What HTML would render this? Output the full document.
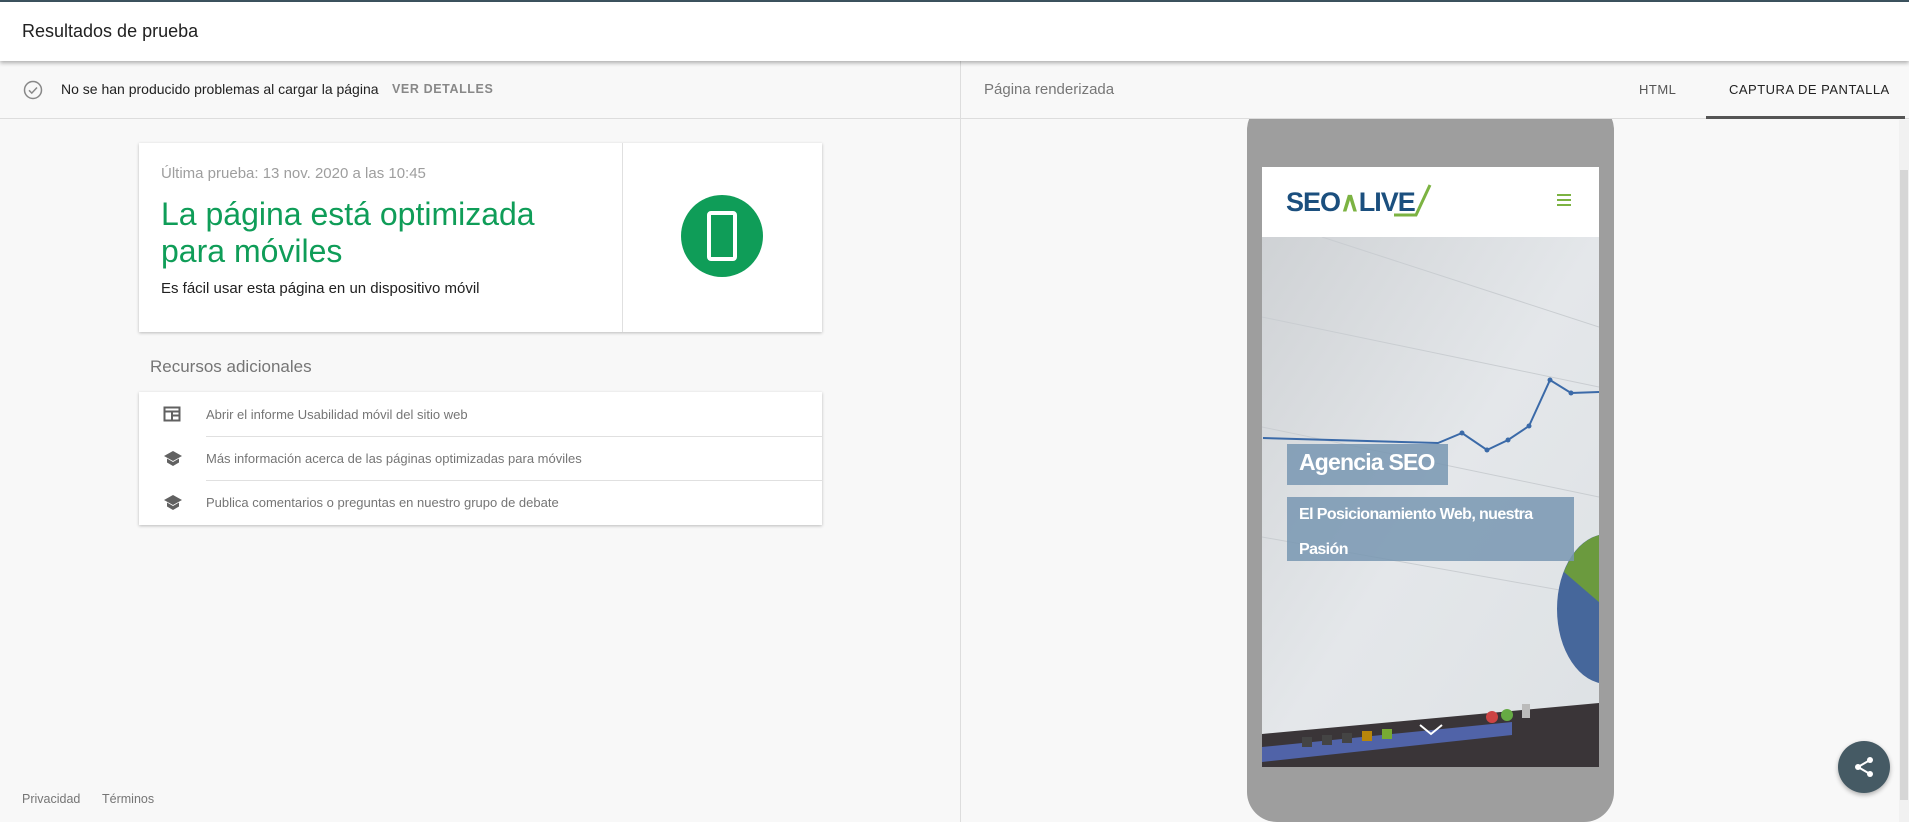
<!DOCTYPE html>
<html><head><meta charset="utf-8">
<style>
*{box-sizing:border-box;margin:0;padding:0}
body{width:1909px;height:822px;overflow:hidden;background:#f8f8f8;font-family:"Liberation Sans",Arial,sans-serif;position:relative}
.abs{position:absolute}
#topline{left:0;top:0;width:1909px;height:2px;background:#3d5360}
#hdr{left:0;top:2px;width:1909px;height:59px;background:#fff;box-shadow:0 2px 4px rgba(0,0,0,.3);z-index:2}
#hdr span{position:absolute;left:22px;top:19px;font-size:18px;color:#212121}
#status{left:0;top:61px;width:960px;height:58px;border-bottom:1px solid #ddd}
#rstatus{left:961px;top:61px;width:948px;height:58px;border-bottom:1px solid #ddd}
#vdiv{left:960px;top:61px;width:1px;height:761px;background:#ddd}
.card{background:#fff;box-shadow:0 1px 3px rgba(0,0,0,.25)}
</style></head><body>
<div class="abs" id="topline"></div>
<div class="abs" id="hdr"><span>Resultados de prueba</span></div>
<div class="abs" id="status">
 <svg class="abs" style="left:23px;top:19px" width="20" height="20" viewBox="0 0 20 20"><circle cx="10" cy="10" r="8.5" fill="none" stroke="#888" stroke-width="1.5"/><path d="M6 10.3l2.8 2.8 5.2-5.6" fill="none" stroke="#888" stroke-width="1.5"/></svg>
 <span class="abs" style="left:61px;top:20px;font-size:14px;color:#212121">No se han producido problemas al cargar la página</span>
 <span class="abs" style="left:392px;top:21px;font-size:12.5px;color:#888;font-weight:bold;letter-spacing:.6px">VER DETALLES</span>
</div>
<div class="abs" id="vdiv"></div>
<div class="abs" id="rstatus">
 <span class="abs" style="left:23px;top:20px;font-size:15px;color:#777">Página renderizada</span>
 <span class="abs" style="left:678px;top:21px;font-size:13px;color:#555;letter-spacing:.5px">HTML</span>
 <span class="abs" style="left:768px;top:21px;font-size:13px;color:#222;letter-spacing:.5px">CAPTURA DE PANTALLA</span>
 <div class="abs" style="left:745px;top:55px;width:199px;height:3px;background:#555"></div>
</div>
<div class="abs card" style="left:139px;top:143px;width:683px;height:189px">
 <div class="abs" style="left:483px;top:0;width:1px;height:189px;background:#e0e0e0"></div>
 <span class="abs" style="left:22px;top:22px;font-size:15px;color:#9e9e9e">Última prueba: 13 nov. 2020 a las 10:45</span>
 <div class="abs" style="left:22px;top:53px;font-size:32px;line-height:37px;color:#0f9d58">La página está optimizada<br>para móviles</div>
 <span class="abs" style="left:22px;top:137px;font-size:15px;color:#212121">Es fácil usar esta página en un dispositivo móvil</span>
 <div class="abs" style="left:542px;top:52px;width:82px;height:82px;border-radius:50%;background:#0f9d58"></div>
 <div class="abs" style="left:568px;top:68px;width:30px;height:50px;border:4px solid #fff;border-radius:4px"></div>
</div>
<span class="abs" style="left:150px;top:357px;font-size:17px;color:#757575">Recursos adicionales</span>
<div class="abs card" style="left:139px;top:392px;width:683px;height:133px">
 <div class="abs" style="left:67px;top:44px;width:616px;height:1px;background:#e0e0e0"></div>
 <div class="abs" style="left:67px;top:88px;width:616px;height:1px;background:#e0e0e0"></div>
 <svg class="abs" style="left:24px;top:13px" width="18" height="18" viewBox="0 0 18 18"><rect x="1.5" y="2.5" width="15" height="13" fill="none" stroke="#616161" stroke-width="2"/><path d="M1.5 6.5h15M9 6.5v9M9 10.5h7" stroke="#616161" stroke-width="2" fill="none"/></svg>
 <svg class="abs" style="left:24px;top:57px" width="20" height="18" viewBox="0 0 20 18"><path d="M10 2L1 7l9 5 9-5z" fill="#616161"/><path d="M4 9.5v4l6 3.5 6-3.5v-4l-6 3.5z" fill="#616161"/></svg>
 <svg class="abs" style="left:24px;top:101px" width="20" height="18" viewBox="0 0 20 18"><path d="M10 2L1 7l9 5 9-5z" fill="#616161"/><path d="M4 9.5v4l6 3.5 6-3.5v-4l-6 3.5z" fill="#616161"/></svg>
 <span class="abs" style="left:67px;top:15px;font-size:13px;color:#757575">Abrir el informe Usabilidad móvil del sitio web</span>
 <span class="abs" style="left:67px;top:59px;font-size:13px;color:#757575">Más información acerca de las páginas optimizadas para móviles</span>
 <span class="abs" style="left:67px;top:103px;font-size:13px;color:#757575">Publica comentarios o preguntas en nuestro grupo de debate</span>
</div>
<span class="abs" style="left:22px;top:792px;font-size:12.5px;color:#757575">Privacidad</span>
<span class="abs" style="left:102px;top:792px;font-size:12.5px;color:#757575">Términos</span>

<!-- phone -->
<div class="abs" style="left:1247px;top:100px;width:367px;height:722px;background:#9e9e9e;border-radius:30px"></div>
<div class="abs" style="left:1247px;top:61px;width:367px;height:58px;background:#f8f8f8;border-bottom:1px solid #ddd"></div>
<div class="abs" style="left:1262px;top:167px;width:337px;height:600px;background:#fff;overflow:hidden">
 <div class="abs" style="left:24px;top:20px;font-size:27px;font-weight:bold;color:#1b4f7e;letter-spacing:-1px">SEO<span style="color:#7cb342">∧</span>LIVE</div>
 <svg class="abs" style="left:130px;top:14px" width="40" height="40" viewBox="0 0 40 40"><path d="M2 34h22L38 4" fill="none" stroke="#7cb342" stroke-width="3"/></svg>
 <div class="abs" style="left:295px;top:27px;width:14px;height:2px;background:#7cb342;box-shadow:0 5px 0 #7cb342,0 10px 0 #7cb342"></div>
 <svg class="abs" style="left:0;top:70px" width="337" height="530" viewBox="0 0 337 530">
  <defs><linearGradient id="g" x1="0" y1="0" x2="1" y2="1"><stop offset="0" stop-color="#cfd2d5"/><stop offset=".5" stop-color="#e4e7ea"/><stop offset="1" stop-color="#dde1e4"/></linearGradient></defs>
  <rect width="337" height="530" fill="url(#g)"/>
  <path d="M60 0L337 90M0 80L337 150M0 190L337 260M0 300L337 360" stroke="#c9cdd1" stroke-width="1"/>
  <path d="M1 201L176 206 200 196 225 213 246 203 267 189 288 143 309 156 337 155" fill="none" stroke="#3b6aa8" stroke-width="2"/>
  <g fill="#3b6aa8"><circle cx="200" cy="196" r="2.5"/><circle cx="225" cy="213" r="2.5"/><circle cx="246" cy="203" r="2.5"/><circle cx="267" cy="189" r="2.5"/><circle cx="288" cy="143" r="2.5"/><circle cx="309" cy="156" r="2.5"/></g>
  <ellipse cx="345" cy="372" rx="50" ry="75" fill="#46679b"/>
  <path d="M345 372L345 297A50 75 0 0 0 302 335z" fill="#6b9a3e"/>
  <path d="M0 497L337 466V530H0z" fill="#3a3538"/>
  <path d="M0 510L250 485V498L0 525z" fill="#5063a8"/>
  <g fill="#444"><rect x="40" y="500" width="10" height="10"/><rect x="60" y="498" width="10" height="10"/><rect x="80" y="496" width="10" height="10"/><rect x="100" y="494" width="10" height="10" fill="#b8860b"/><rect x="120" y="492" width="10" height="10" fill="#7a3"/><circle cx="230" cy="480" r="6" fill="#c44"/><circle cx="245" cy="478" r="6" fill="#6a4"/><rect x="260" y="467" width="8" height="14" fill="#bbb"/></g>
  <path d="M158 488l11 9 11-9" fill="none" stroke="#fff" stroke-width="2"/>
 </svg>
 <div class="abs" style="left:25px;top:277px;width:161px;height:41px;background:rgba(120,150,178,.85);color:#fff;font-weight:bold;font-size:23px;padding:5px 12px;letter-spacing:-.8px">Agencia SEO</div>
 <div class="abs" style="left:25px;top:330px;width:287px;height:64px;background:rgba(120,150,178,.85);color:#fff;font-weight:bold;font-size:16px;line-height:35px;padding:0 12px;letter-spacing:-.6px">El Posicionamiento Web, nuestra<br>Pasión</div>
</div>
<div class="abs" style="left:1899px;top:120px;width:10px;height:702px;background:#f1f1f1"></div>
<div class="abs" style="left:1900px;top:170px;width:8px;height:630px;background:#d6d6d6"></div>
<div class="abs" style="left:1838px;top:741px;width:52px;height:52px;border-radius:50%;background:#455a64;box-shadow:0 2px 5px rgba(0,0,0,.3)"></div>
<svg class="abs" style="left:1852px;top:755px" width="24" height="24" viewBox="0 0 24 24"><circle cx="18" cy="5" r="3" fill="#fff"/><circle cx="6" cy="12" r="3" fill="#fff"/><circle cx="18" cy="19" r="3" fill="#fff"/><path d="M18 5L6 12l12 7" stroke="#fff" stroke-width="2" fill="none"/></svg>
</body></html>
